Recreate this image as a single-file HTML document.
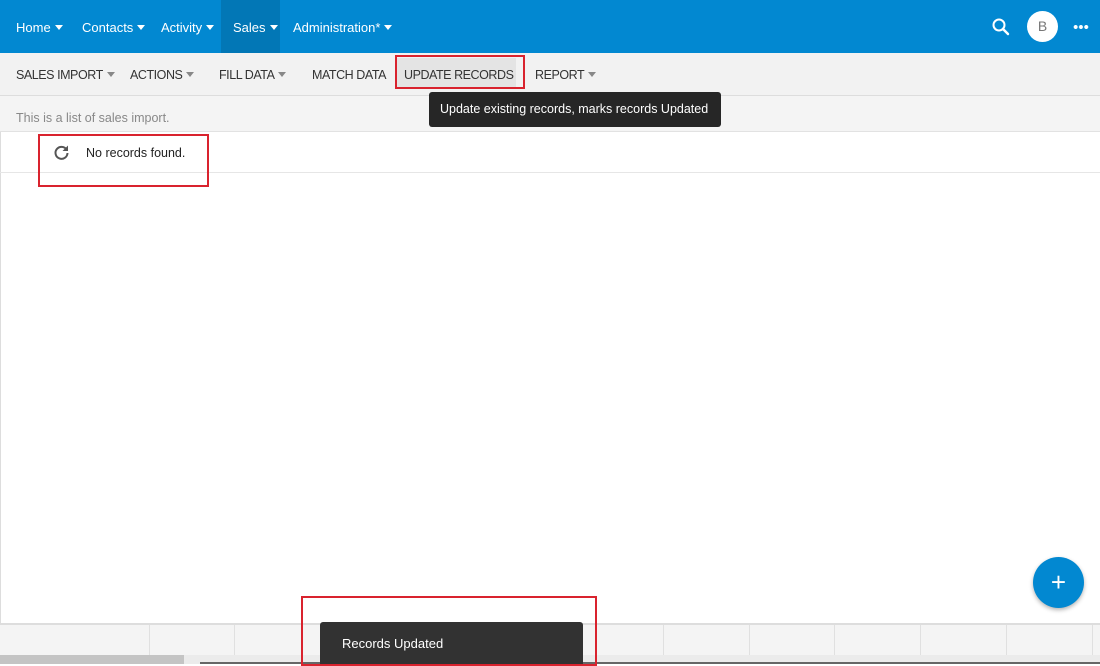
<!DOCTYPE html>
<html><head><style>
*{box-sizing:border-box;margin:0;padding:0}
body{width:1100px;height:664px;overflow:hidden;position:relative;background:#fff;font-family:"Liberation Sans",sans-serif;font-size:13px;color:#222}
.top{position:absolute;left:0;top:0;width:1100px;height:53px;background:#0288d1;color:#fff}
.top span{position:absolute;top:20px;font-size:13px}
.car{display:inline-block;width:0;height:0;border-left:4.5px solid transparent;border-right:4.5px solid transparent;border-top:5px solid currentColor;vertical-align:middle;margin-left:4px;position:relative;top:-1px}
.sales{position:absolute;left:221px;top:0;width:59px;height:53px;background:#0277b6}
.sub{position:absolute;left:0;top:53px;width:1100px;height:43px;background:#f2f2f2;border-bottom:1px solid #ddd}
.sub span{position:absolute;top:15px;font-size:12.5px;letter-spacing:-0.45px;color:#333}
.sub .car{color:#888}
.desc{position:absolute;left:0;top:96px;width:1100px;height:36px;background:#f4f4f4;border-bottom:1px solid #e2e2e2;color:#888;font-size:12.5px;padding:15px 0 0 16px}
.red{position:absolute;border:2px solid #d9232e}
.tip{position:absolute;left:429px;top:92px;width:292px;height:35px;background:#262626;color:#fff;border-radius:3px;font-size:12.5px;padding:10px 0 0 11px}
.foot{position:absolute;left:0;top:623px;width:1100px;height:32px;background:#f4f4f4;border-top:2px solid #ddd}
.foot i{position:absolute;top:0;height:32px;border-left:1px solid #e0e0e0}
</style></head><body>
<div class="top">
<div class="sales"></div>
<span style="left:16px">Home<b class="car"></b></span>
<span style="left:82px">Contacts<b class="car"></b></span>
<span style="left:161px">Activity<b class="car"></b></span>
<span style="left:233px">Sales<b class="car"></b></span>
<span style="left:293px">Administration*<b class="car"></b></span>
<svg style="position:absolute;left:991px;top:17px" width="20" height="20" viewBox="0 0 20 20"><circle cx="8" cy="8" r="5.5" fill="none" stroke="#fff" stroke-width="2"/><path d="M12 12l5 5" stroke="#fff" stroke-width="2.4" stroke-linecap="round"/></svg>
<div style="position:absolute;left:1027px;top:11px;width:31px;height:31px;border-radius:50%;background:#fff;color:#777;text-align:center;line-height:31px;font-size:14px">B</div>
<div style="position:absolute;left:1073px;top:25px;width:16px;height:4px;background:radial-gradient(circle,#fff 1.8px,transparent 2.2px) 0 0/5.3px 4px repeat-x"></div>
</div>
<div class="sub">
<div style="position:absolute;left:397px;top:5px;width:119px;height:31px;background:#e4e4e4"></div>
<span style="left:16px">SALES IMPORT<b class="car"></b></span>
<span style="left:130px">ACTIONS<b class="car"></b></span>
<span style="left:219px">FILL DATA<b class="car"></b></span>
<span style="left:312px">MATCH DATA</span>
<span style="left:404px">UPDATE RECORDS</span>
<span style="left:535px">REPORT<b class="car"></b></span>
</div>
<div class="desc">This is a list of sales import.</div>
<div style="position:absolute;left:0;top:132px;width:1px;height:491px;background:#ddd"></div>
<svg style="position:absolute;left:53px;top:144px" width="17" height="17" viewBox="0 0 17 17"><path d="M13.5 5.5A6 6 0 1 0 14.5 9" fill="none" stroke="#555" stroke-width="2"/><path d="M15 1.5v5.5h-5.5z" fill="#555"/></svg>
<div style="position:absolute;left:86px;top:146px;font-size:12.5px;color:#222">No records found.</div>
<div style="position:absolute;left:0;top:172px;width:1100px;height:1px;background:#e6e6e6"></div>
<div class="tip">Update existing records, marks records Updated</div>
<div class="foot">
<i style="left:149px"></i><i style="left:234px"></i><i style="left:320px"></i><i style="left:406px"></i><i style="left:491px"></i><i style="left:577px"></i><i style="left:663px"></i><i style="left:749px"></i><i style="left:834px"></i><i style="left:920px"></i><i style="left:1006px"></i><i style="left:1092px"></i>
</div>
<div style="position:absolute;left:0;top:655px;width:1100px;height:9px;background:#ebebeb"></div>
<div style="position:absolute;left:0;top:655px;width:184px;height:9px;background:#c4c4c4"></div>
<div style="position:absolute;left:200px;top:662px;width:900px;height:2px;background:#666"></div>
<div style="position:absolute;left:1033px;top:557px;width:51px;height:51px;border-radius:50%;background:#0288d1;box-shadow:0 2px 4px rgba(0,0,0,.3);color:#fff;text-align:center;line-height:50px;font-size:26px">+</div>
<div style="position:absolute;left:320px;top:622px;width:263px;height:42px;background:#323232;border-radius:3px 3px 0 0;color:#fff;font-size:13px;padding:14px 0 0 22px">Records Updated</div>
<div class="red" style="left:395px;top:55px;width:130px;height:34px"></div>
<div class="red" style="left:38px;top:134px;width:171px;height:53px"></div>
<div class="red" style="left:301px;top:596px;width:296px;height:70px"></div>
</body></html>
